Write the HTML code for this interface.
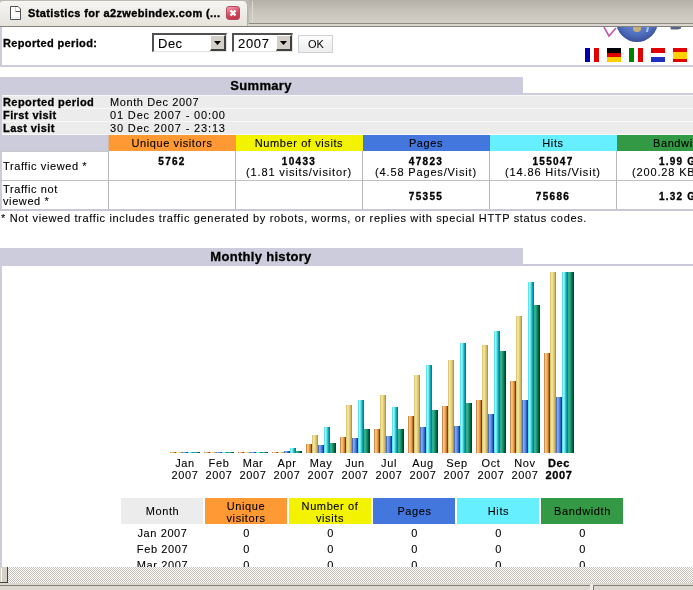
<!DOCTYPE html>
<html><head><meta charset="utf-8">
<style>
*{margin:0;padding:0;box-sizing:border-box}
html,body{width:693px;height:590px;overflow:hidden;background:#fff;position:relative;font-family:"Liberation Sans",sans-serif;font-size:11px;color:#000}
.a{position:absolute}
.t{position:absolute;white-space:nowrap;letter-spacing:0.6px;font-size:11px;line-height:13px;-webkit-text-stroke:0.1px #000}
.b{font-weight:bold;-webkit-text-stroke:0.3px #000}
.n{letter-spacing:0.85px}
.c{text-align:center}
.g0{background:linear-gradient(90deg,#c89050 0px 1px,#ffc070 1px 2px,#f8b868 2px 3px,#e0a050 3px 4px,#c07830 4px 5px,#804000 5px 6px)}
.g1{background:linear-gradient(90deg,#d8c878 0px 1px,#f0e490 1px 2px,#f0e090 2px 3px,#e0cc80 3px 4px,#d0b868 4px 5px,#b09850 5px 6px)}
.g2{background:linear-gradient(90deg,#5070b0 0px 1px,#80a8ff 1px 2px,#7098f0 2px 3px,#5080e0 3px 4px,#3060c0 4px 5px,#104090 5px 6px)}
.g3{background:linear-gradient(90deg,#60e0f0 0px 1px,#80ffff 1px 2px,#70e8e8 2px 3px,#40c0d0 3px 4px,#10a0b0 4px 5px,#008090 5px 6px)}
.g4{background:linear-gradient(90deg,#30b090 0px 1px,#30b088 1px 2px,#209870 2px 3px,#108060 3px 4px,#006040 4px 5px,#004830 5px 6px)}
</style></head><body>
<div id="root" style="position:absolute;left:0;top:0;width:693px;height:590px;will-change:transform">

<!-- TAB BAR -->
<div class="a" style="left:0;top:0;width:693px;height:27px;background:#bdb9b1"></div>
<div class="a" style="left:249px;top:0px;width:444px;height:23px;background:linear-gradient(#b4b0a8,#c6c2ba 45%,#d3cfc7)"></div>
<div class="a" style="left:252px;top:1px;width:1px;height:22px;background:#dcd9d2"></div>
<div class="a" style="left:249px;top:23px;width:444px;height:1px;background:#8e8b85"></div>
<div class="a" style="left:0;top:24px;width:693px;height:2px;background:#dad7d0"></div>
<div class="a" style="left:0;top:26px;width:693px;height:1px;background:#85827c"></div>
<div class="a" style="left:0;top:1px;width:248px;height:25px;background:linear-gradient(#f6f5f2,#e6e3dc);border-top-right-radius:5px;border-top-left-radius:3px;border-right:1px solid #b5b2ab"></div>
<!-- page icon -->
<svg class="a" style="left:6px;top:3px" width="20" height="20"><path d="M4.5 3.5H12L14.5 6V16.5H4.5Z" fill="#fff" stroke="#505050"/><path d="M9.5 4V8" fill="none" stroke="#d0d0d0"/><path d="M9.5 8.5H14" fill="none" stroke="#555"/><path d="M5 14.5H14" stroke="#e4eef8"/></svg>
<div class="t b" style="left:28px;top:7px;font-size:11px;letter-spacing:0.38px;line-height:13px;-webkit-text-stroke:0.35px #000">Statistics for a2zwebindex.com (...</div>
<!-- close -->
<div class="a" style="left:226px;top:6px;width:14px;height:14px;border-radius:3px;background:linear-gradient(160deg,#f2a6b2,#d4465c 55%,#c0304a);border:1px solid #b8485a"></div>
<svg class="a" style="left:226px;top:6px" width="14" height="14"><path d="M4.5 4.5 L9.5 9.5 M9.5 4.5 L4.5 9.5" stroke="#fff" stroke-width="2.4"/></svg>

<!-- left strip -->
<div class="a" style="left:0;top:27px;width:2px;height:40px;background:#ccccdd"></div>
<div class="a" style="left:0;top:95px;width:2px;height:116px;background:#ccccdd"></div>
<div class="a" style="left:0;top:266px;width:2px;height:301px;background:#ccccdd"></div>

<!-- FORM -->
<div class="t b" style="left:3px;top:37px;letter-spacing:0.35px">Reported period:</div>
<div class="a" style="left:152px;top:33px;width:75px;height:19px;border-style:solid;border-width:2px 1px 1px 2px;border-color:#505050 #e4e2dc #e4e2dc #505050;background:#fff"></div>
<div class="a" style="left:210px;top:35px;width:16px;height:16px;background:#d4d0c8;border-style:solid;border-width:1px 2px 2px 1px;border-color:#fff #404040 #404040 #fff"></div>
<svg class="a" style="left:214px;top:41px" width="7" height="4"><path d="M0 0H7L3.5 4Z" fill="#000"/></svg>
<div class="t" style="left:158px;top:36px;font-size:13px;letter-spacing:0.5px;line-height:15px">Dec</div>
<div class="a" style="left:232px;top:33px;width:61px;height:19px;border-style:solid;border-width:2px 1px 1px 2px;border-color:#505050 #e4e2dc #e4e2dc #505050;background:#fff"></div>
<div class="a" style="left:276px;top:35px;width:16px;height:16px;background:#d4d0c8;border-style:solid;border-width:1px 2px 2px 1px;border-color:#fff #404040 #404040 #fff"></div>
<svg class="a" style="left:280px;top:41px" width="7" height="4"><path d="M0 0H7L3.5 4Z" fill="#000"/></svg>
<div class="t" style="left:238px;top:36px;font-size:13px;letter-spacing:0.7px;line-height:15px">2007</div>
<div class="a" style="left:298px;top:35px;width:35px;height:18px;border:1px solid #cfd0d4;background:linear-gradient(#fdfdfd,#ececec)"></div>
<div class="t" style="left:308px;top:38px;font-size:11px;letter-spacing:0;line-height:13px;color:#000;-webkit-text-stroke:0">OK</div>

<!-- logo & flags -->
<svg class="a" style="left:600px;top:27px" width="93" height="18">
  <defs><radialGradient id="gl" cx="0.5" cy="0.4" r="0.6"><stop offset="0" stop-color="#7d98e0"/><stop offset="0.7" stop-color="#5070c0"/><stop offset="1" stop-color="#3a4f98"/></radialGradient></defs>
  <path d="M4 0 L9 9 L16 1" stroke="#c058b0" stroke-width="1.6" fill="none"/>
  <circle cx="37" cy="-6" r="21" fill="url(#gl)"/>
  <ellipse cx="37" cy="1.5" rx="4" ry="3.5" fill="#c8b078"/>
  <path d="M47 0 L49 0 L48 5 L46 5Z" fill="#a8c0f0"/>
  <path d="M70 -1 H81 V1.5 L78 2.5 H71Z" fill="#5a6488"/>
</svg>
<div class="a" style="left:585px;top:48px;width:14px;height:14px;background:linear-gradient(90deg,#0000b0 0 33%,#fff 33% 66%,#e00000 66%)"></div>
<div class="a" style="left:607px;top:48px;width:14px;height:14px;background:linear-gradient(#000 0 33%,#e00000 33% 66%,#ffcc00 66%)"></div>
<div class="a" style="left:629px;top:48px;width:14px;height:14px;background:linear-gradient(90deg,#008000 0 33%,#fff 33% 66%,#e00000 66%)"></div>
<div class="a" style="left:651px;top:48px;width:14px;height:14px;background:linear-gradient(#e00000 0 33%,#fff 33% 66%,#2030c0 66%)"></div>
<div class="a" style="left:673px;top:48px;width:14px;height:14px;background:linear-gradient(#e00000 0 25%,#ffd000 25% 75%,#e00000 75%)"></div>

<div class="a" style="left:0;top:65px;width:693px;height:2px;background:#ccccdd"></div>

<!-- SUMMARY -->
<div class="a" style="left:0;top:77px;width:523px;height:18px;background:#ccccdd"></div>
<div class="t b c" style="left:0;top:78px;width:522px;font-size:13px;letter-spacing:0.3px;line-height:15px">Summary</div>
<div class="a" style="left:523px;top:93px;width:170px;height:2px;background:#ccccdd"></div>
<div class="a" style="left:0;top:95px;width:693px;height:40px;background:#f8f8f8;border-left:2px solid #ccccdd"></div>
<div class="a" style="left:2px;top:96px;width:691px;height:12px;background:#ececec"></div>
<div class="a" style="left:2px;top:109px;width:691px;height:12px;background:#ececec"></div>
<div class="a" style="left:2px;top:122px;width:691px;height:12px;background:#ececec"></div>
<div class="t b" style="left:3px;top:96px;letter-spacing:0.42px">Reported period</div>
<div class="t b" style="left:3px;top:109px;letter-spacing:0.42px">First visit</div>
<div class="t b" style="left:3px;top:122px;letter-spacing:0.42px">Last visit</div>
<div class="t" style="left:110px;top:96px">Month Dec 2007</div>
<div class="t n" style="left:110px;top:109px">01 Dec 2007 - 00:00</div>
<div class="t n" style="left:110px;top:122px">30 Dec 2007 - 23:13</div>

<!-- colored header row -->
<div class="a" style="left:2px;top:135px;width:106px;height:16px;background:#ccccdd"></div>
<div class="a" style="left:108px;top:135px;width:1px;height:16px;background:#d8b898"></div>
<div class="a" style="left:109px;top:135px;width:127px;height:16px;background:#ff9933"></div>
<div class="a" style="left:236px;top:135px;width:127px;height:16px;background:#f3f300"></div>
<div class="a" style="left:363px;top:135px;width:127px;height:16px;background:#4477dd"></div>
<div class="a" style="left:490px;top:135px;width:127px;height:16px;background:#66f0ff"></div>
<div class="a" style="left:617px;top:135px;width:76px;height:16px;background:#339944"></div>
<div class="t c" style="left:109px;top:137px;width:126px">Unique visitors</div>
<div class="t c" style="left:236px;top:137px;width:126px">Number of visits</div>
<div class="t c" style="left:363px;top:137px;width:126px">Pages</div>
<div class="t c" style="left:490px;top:137px;width:126px">Hits</div>
<div class="t" style="left:653px;top:137px">Bandwidth</div>

<!-- data rows -->
<div class="a" style="left:0;top:151px;width:693px;height:60px;background:#fff;border-left:2px solid #ccccdd"></div>
<div class="a" style="left:0;top:151px;width:108px;height:1px;background:#c8c8c8"></div>
<div class="a" style="left:0;top:180px;width:693px;height:1px;background:#c0c0c0"></div>
<div class="a" style="left:0;top:209px;width:693px;height:2px;background:#c8c8d4"></div>
<div class="a" style="left:108px;top:151px;width:1px;height:58px;background:#b8b8b8"></div>
<div class="a" style="left:235px;top:151px;width:1px;height:58px;background:#b8b8b8"></div>
<div class="a" style="left:362px;top:151px;width:1px;height:58px;background:#b8b8b8"></div>
<div class="a" style="left:489px;top:151px;width:1px;height:58px;background:#b8b8b8"></div>
<div class="a" style="left:616px;top:151px;width:1px;height:58px;background:#b8b8b8"></div>
<div class="t" style="left:3px;top:160px">Traffic viewed *</div>
<div class="t" style="left:3px;top:183px">Traffic not</div>
<div class="t" style="left:3px;top:195px">viewed *</div>
<div class="t b c n" style="left:109px;top:155px;width:126px;font-size:10px;letter-spacing:1.3px">5762</div>
<div class="t b c n" style="left:236px;top:155px;width:126px;font-size:10px;letter-spacing:1.3px">10433</div>
<div class="t c n" style="left:236px;top:166px;width:126px">(1.81 visits/visitor)</div>
<div class="t b c n" style="left:363px;top:155px;width:126px;font-size:10px;letter-spacing:1.3px">47823</div>
<div class="t c n" style="left:363px;top:166px;width:126px">(4.58 Pages/Visit)</div>
<div class="t b c n" style="left:490px;top:155px;width:126px;font-size:10px;letter-spacing:1.3px">155047</div>
<div class="t c n" style="left:490px;top:166px;width:126px">(14.86 Hits/Visit)</div>
<div class="t b n" style="left:659px;top:155px;font-size:10px;letter-spacing:1.2px">1.99 GB</div>
<div class="t n" style="left:632px;top:166px">(200.28 KB/Visit)</div>
<div class="t b c n" style="left:363px;top:190px;width:126px;font-size:10px;letter-spacing:1.3px">75355</div>
<div class="t b c n" style="left:490px;top:190px;width:126px;font-size:10px;letter-spacing:1.3px">75686</div>
<div class="t b n" style="left:659px;top:190px;font-size:10px;letter-spacing:1.2px">1.32 GB</div>

<div class="t" style="left:1px;top:212px;letter-spacing:0.66px">* Not viewed traffic includes traffic generated by robots, worms, or replies with special HTTP status codes.</div>

<!-- MONTHLY HISTORY -->
<div class="a" style="left:0;top:248px;width:523px;height:18px;background:#ccccdd"></div>
<div class="t b c" style="left:0;top:249px;width:522px;font-size:13px;letter-spacing:0.3px;line-height:15px">Monthly history</div>
<div class="a" style="left:523px;top:264px;width:170px;height:2px;background:#c8c8d8"></div>

<div id="chart">
<div class="a g0" style="left:170px;top:452px;width:6px;height:1px"></div>
<div class="a g1" style="left:176px;top:452px;width:6px;height:1px"></div>
<div class="a g2" style="left:182px;top:452px;width:6px;height:1px"></div>
<div class="a g3" style="left:188px;top:452px;width:6px;height:1px"></div>
<div class="a g4" style="left:194px;top:452px;width:6px;height:1px"></div>
<div class="t c" style="left:165px;top:457px;width:40px;line-height:12px">Jan<br>2007</div>
<div class="a g0" style="left:204px;top:452px;width:6px;height:1px"></div>
<div class="a g1" style="left:210px;top:452px;width:6px;height:1px"></div>
<div class="a g2" style="left:216px;top:452px;width:6px;height:1px"></div>
<div class="a g3" style="left:222px;top:452px;width:6px;height:1px"></div>
<div class="a g4" style="left:228px;top:452px;width:6px;height:1px"></div>
<div class="t c" style="left:199px;top:457px;width:40px;line-height:12px">Feb<br>2007</div>
<div class="a g0" style="left:238px;top:452px;width:6px;height:1px"></div>
<div class="a g1" style="left:244px;top:452px;width:6px;height:1px"></div>
<div class="a g2" style="left:250px;top:452px;width:6px;height:1px"></div>
<div class="a g3" style="left:256px;top:452px;width:6px;height:1px"></div>
<div class="a g4" style="left:262px;top:452px;width:6px;height:1px"></div>
<div class="t c" style="left:233px;top:457px;width:40px;line-height:12px">Mar<br>2007</div>
<div class="a g0" style="left:272px;top:452px;width:6px;height:1px"></div>
<div class="a g1" style="left:278px;top:452px;width:6px;height:1px"></div>
<div class="a g2" style="left:284px;top:451px;width:6px;height:2px"></div>
<div class="a g3" style="left:290px;top:448px;width:6px;height:5px"></div>
<div class="a g4" style="left:296px;top:451px;width:6px;height:2px"></div>
<div class="t c" style="left:267px;top:457px;width:40px;line-height:12px">Apr<br>2007</div>
<div class="a g0" style="left:306px;top:444px;width:6px;height:9px"></div>
<div class="a g1" style="left:312px;top:435px;width:6px;height:18px"></div>
<div class="a g2" style="left:318px;top:445px;width:6px;height:8px"></div>
<div class="a g3" style="left:324px;top:427px;width:6px;height:26px"></div>
<div class="a g4" style="left:330px;top:443px;width:6px;height:10px"></div>
<div class="t c" style="left:301px;top:457px;width:40px;line-height:12px">May<br>2007</div>
<div class="a g0" style="left:340px;top:437px;width:6px;height:16px"></div>
<div class="a g1" style="left:346px;top:405px;width:6px;height:48px"></div>
<div class="a g2" style="left:352px;top:438px;width:6px;height:15px"></div>
<div class="a g3" style="left:358px;top:400px;width:6px;height:53px"></div>
<div class="a g4" style="left:364px;top:429px;width:6px;height:24px"></div>
<div class="t c" style="left:335px;top:457px;width:40px;line-height:12px">Jun<br>2007</div>
<div class="a g0" style="left:374px;top:429px;width:6px;height:24px"></div>
<div class="a g1" style="left:380px;top:395px;width:6px;height:58px"></div>
<div class="a g2" style="left:386px;top:436px;width:6px;height:17px"></div>
<div class="a g3" style="left:392px;top:407px;width:6px;height:46px"></div>
<div class="a g4" style="left:398px;top:429px;width:6px;height:24px"></div>
<div class="t c" style="left:369px;top:457px;width:40px;line-height:12px">Jul<br>2007</div>
<div class="a g0" style="left:408px;top:416px;width:6px;height:37px"></div>
<div class="a g1" style="left:414px;top:375px;width:6px;height:78px"></div>
<div class="a g2" style="left:420px;top:427px;width:6px;height:26px"></div>
<div class="a g3" style="left:426px;top:365px;width:6px;height:88px"></div>
<div class="a g4" style="left:432px;top:410px;width:6px;height:43px"></div>
<div class="t c" style="left:403px;top:457px;width:40px;line-height:12px">Aug<br>2007</div>
<div class="a g0" style="left:442px;top:406px;width:6px;height:47px"></div>
<div class="a g1" style="left:448px;top:360px;width:6px;height:93px"></div>
<div class="a g2" style="left:454px;top:426px;width:6px;height:27px"></div>
<div class="a g3" style="left:460px;top:343px;width:6px;height:110px"></div>
<div class="a g4" style="left:466px;top:403px;width:6px;height:50px"></div>
<div class="t c" style="left:437px;top:457px;width:40px;line-height:12px">Sep<br>2007</div>
<div class="a g0" style="left:476px;top:400px;width:6px;height:53px"></div>
<div class="a g1" style="left:482px;top:345px;width:6px;height:108px"></div>
<div class="a g2" style="left:488px;top:414px;width:6px;height:39px"></div>
<div class="a g3" style="left:494px;top:331px;width:6px;height:122px"></div>
<div class="a g4" style="left:500px;top:351px;width:6px;height:102px"></div>
<div class="t c" style="left:471px;top:457px;width:40px;line-height:12px">Oct<br>2007</div>
<div class="a g0" style="left:510px;top:381px;width:6px;height:72px"></div>
<div class="a g1" style="left:516px;top:316px;width:6px;height:137px"></div>
<div class="a g2" style="left:522px;top:400px;width:6px;height:53px"></div>
<div class="a g3" style="left:528px;top:282px;width:6px;height:171px"></div>
<div class="a g4" style="left:534px;top:305px;width:6px;height:148px"></div>
<div class="t c" style="left:505px;top:457px;width:40px;line-height:12px">Nov<br>2007</div>
<div class="a g0" style="left:544px;top:353px;width:6px;height:100px"></div>
<div class="a g1" style="left:550px;top:272px;width:6px;height:181px"></div>
<div class="a g2" style="left:556px;top:397px;width:6px;height:56px"></div>
<div class="a g3" style="left:562px;top:272px;width:6px;height:181px"></div>
<div class="a g4" style="left:568px;top:272px;width:6px;height:181px"></div>
<div class="t c b" style="left:539px;top:457px;width:40px;line-height:12px">Dec<br>2007</div>
</div>

<!-- month table -->
<div class="a" style="left:121px;top:498px;width:82px;height:26px;background:#ececec"></div>
<div class="a" style="left:205px;top:498px;width:82px;height:26px;background:#ff9933"></div>
<div class="a" style="left:289px;top:498px;width:82px;height:26px;background:#f3f300"></div>
<div class="a" style="left:373px;top:498px;width:82px;height:26px;background:#4477dd"></div>
<div class="a" style="left:457px;top:498px;width:82px;height:26px;background:#66f0ff"></div>
<div class="a" style="left:541px;top:498px;width:82px;height:26px;background:#339944"></div>
<div class="t c" style="left:121px;top:505px;width:83px">Month</div>
<div class="t c" style="left:205px;top:500px;width:82px;line-height:12px">Unique<br>visitors</div>
<div class="t c" style="left:289px;top:500px;width:82px;line-height:12px">Number of<br>visits</div>
<div class="t c" style="left:373px;top:505px;width:83px">Pages</div>
<div class="t c" style="left:457px;top:505px;width:83px">Hits</div>
<div class="t c" style="left:541px;top:505px;width:83px">Bandwidth</div>

<div class="t c" style="left:121px;top:527px;width:83px">Jan 2007</div>
<div class="t c" style="left:121px;top:543px;width:83px">Feb 2007</div>
<div class="t c" style="left:121px;top:559px;width:83px">Mar 2007</div>
<div class="t c" style="left:205px;top:527px;width:83px">0</div>
<div class="t c" style="left:205px;top:543px;width:83px">0</div>
<div class="t c" style="left:205px;top:559px;width:83px">0</div>
<div class="t c" style="left:289px;top:527px;width:83px">0</div>
<div class="t c" style="left:289px;top:543px;width:83px">0</div>
<div class="t c" style="left:289px;top:559px;width:83px">0</div>
<div class="t c" style="left:373px;top:527px;width:83px">0</div>
<div class="t c" style="left:373px;top:543px;width:83px">0</div>
<div class="t c" style="left:373px;top:559px;width:83px">0</div>
<div class="t c" style="left:457px;top:527px;width:83px">0</div>
<div class="t c" style="left:457px;top:543px;width:83px">0</div>
<div class="t c" style="left:457px;top:559px;width:83px">0</div>
<div class="t c" style="left:541px;top:527px;width:83px">0</div>
<div class="t c" style="left:541px;top:543px;width:83px">0</div>
<div class="t c" style="left:541px;top:559px;width:83px">0</div>

<!-- SCROLLBAR + STATUS -->
<div class="a" style="left:0;top:567px;width:693px;height:16px;background-color:#fff;background-image:linear-gradient(45deg,#c6c2ba 25%,transparent 25%,transparent 75%,#c6c2ba 75%),linear-gradient(45deg,#c6c2ba 25%,transparent 25%,transparent 75%,#c6c2ba 75%);background-size:2px 2px;background-position:0 0,1px 1px"></div>
<div class="a" style="left:0;top:567px;width:8px;height:16px;background:#d4d0c8;border-right:1px solid #404040;border-bottom:1px solid #404040"></div>
<div class="a" style="left:1px;top:568px;width:1px;height:14px;background:#fff"></div>
<div class="a" style="left:0;top:583px;width:693px;height:7px;background:#dcd8d0"></div>
<div class="a" style="left:0;top:585px;width:590px;height:1px;background:#86827a"></div>
<div class="a" style="left:593px;top:585px;width:100px;height:1px;background:#86827a"></div>
<div class="a" style="left:593px;top:585px;width:1px;height:5px;background:#86827a"></div>
<div class="a" style="left:590px;top:584px;width:3px;height:6px;background:#eeece8"></div>
</div>
</body></html>
